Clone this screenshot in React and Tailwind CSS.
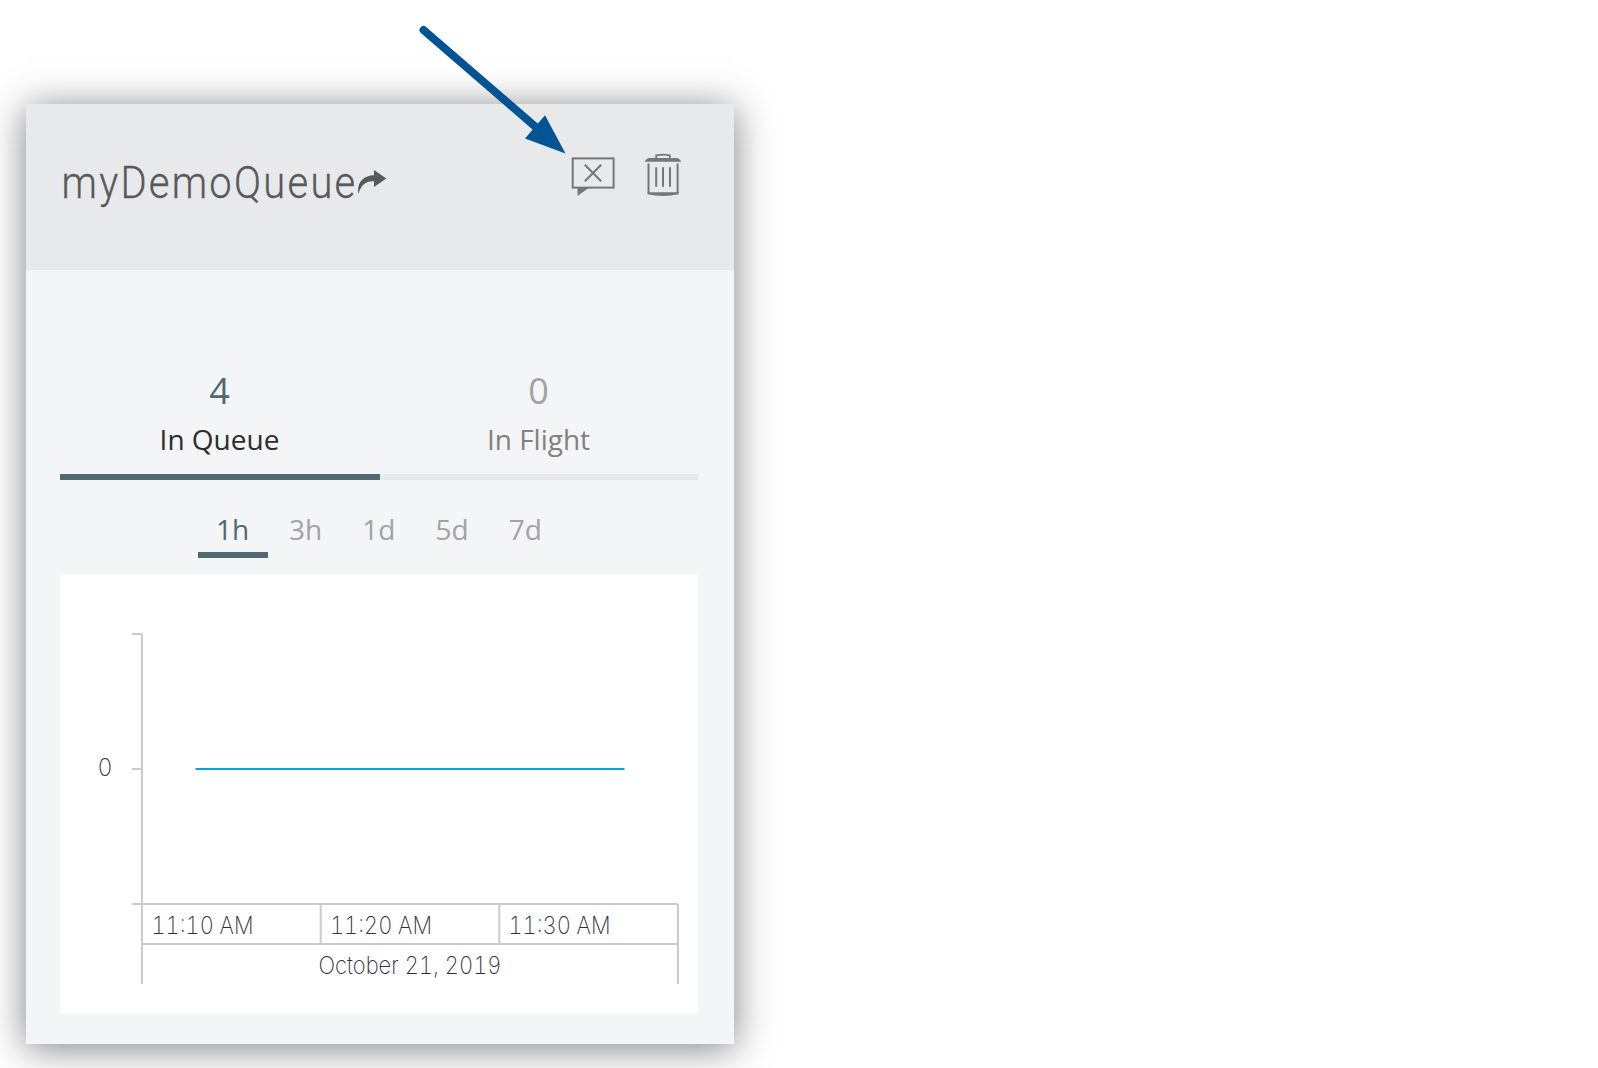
const ranges = ["1h", "3h", "1d", "5d", "7d"];

const times = [
  { label: "11:10 AM", x: 91.5 },
  { label: "11:20 AM", x: 270 },
  { label: "11:30 AM", x: 448.5 },
];

function ShareIcon() {
  return (
    <svg className="h-7 w-[30px]" viewBox="0 0 30 28" fill="#58595b">
      <path d="M17 2 L29.3 10.5 L17 19 V13.4 C8.5 13 4.5 17 1.3 26 C-0.3 14.5 6 7.5 17 7.2 Z" />
    </svg>
  );
}

function PurgeIcon() {
  return (
    <svg className="h-[45px] w-[44px]" viewBox="0 0 44 45" fill="none" stroke="#757678" strokeWidth="2">
      <rect x="1.7" y="6.4" width="40.9" height="29.2" />
      <path d="M13.8 12.8 L30.2 29.2 M30.2 12.8 L13.8 29.2" />
      <path d="M6.5 36 H17.5 L6.5 44 Z" fill="#757678" stroke="none" />
    </svg>
  );
}

function TrashIcon() {
  return (
    <svg className="h-[45px] w-[38px]" viewBox="0 0 38 45" fill="none" stroke="#757678" strokeWidth="2">
      <path d="M12.2 6.5 V3.3 Q19 2 25.8 3.3 V6.5" strokeWidth="1.8" />
      <path d="M0.5 9.8 Q2.5 6 5.5 6 H32.5 Q35.5 6 37.3 9.8 Z" fill="#757678" stroke="none" />
      <path d="M4.5 11.5 V41 M33.6 11.5 V41" />
      <path d="M3.5 40.2 H34.6 V42.3 Q19 45.8 3.5 42.3 Z" fill="#757678" stroke="none" />
      <path d="M12.2 15.3 V34.7 M19 15.3 V34.7 M26 15.3 V34.7" />
    </svg>
  );
}

function Stat({ value, label, active }) {
  return (
    <div
      className={
        active
          ? "flex w-[320px] flex-col items-center border-b-[6px] border-[#4f6872] pr-px text-[#4f6872]"
          : "flex flex-1 flex-col items-center border-b-[6px] border-[#e8e9eb] pr-px text-[#a2a3a3]"
      }
    >
      <span className="text-[36px] leading-[50px]">{value}</span>
      <span
        className={
          active
            ? "mb-[12px] text-[28px] leading-[46px] text-[#2d2d2d]"
            : "mb-[12px] text-[28px] leading-[46px] text-[#808181]"
        }
      >
        {label}
      </span>
    </div>
  );
}

function Chart() {
  return (
    <svg className="block h-[440px] w-[638px] bg-white" viewBox="0 0 638 440">
      <g stroke="#cbcbcb" strokeWidth="2" fill="none">
        <path d="M72 60 H82 M82 60 V410 M72 195 H82 M72 330 H618 M82 370 H618 M618 330 V410" />
        <path d="M260.7 330 V370 M439.3 330 V370" />
      </g>
      <path d="M135.5 195 H564.5" stroke="#05a3df" strokeWidth="2" />
      <g className="tabular-nums" fontFamily="Inter, sans-serif" fontSize="24" fontWeight="200" fill="#2f2d40">
        <text x="37.5" y="202" textLength="15" lengthAdjust="spacingAndGlyphs">0</text>
        {times.map((t) => (
          <text key={t.label} x={t.x} y="360" textLength="102" lengthAdjust="spacingAndGlyphs">
            {t.label}
          </text>
        ))}
        <text x="258.5" y="400" textLength="183" lengthAdjust="spacingAndGlyphs">October 21, 2019</text>
      </g>
    </svg>
  );
}

export default function App() {
  return (
    <div className="relative h-[1068px] w-[1598px] overflow-hidden bg-white pl-[26px] pt-[104px] font-['Open_Sans',sans-serif]">
      <section className="h-[940px] w-[708px] bg-[#f4f5f7] shadow-[0_4px_36px_rgba(0,0,0,0.5)]">
        <header className="flex h-[166px] items-start justify-between bg-[#e8e9eb] pl-[34px] pr-[52px]">
          <div className="flex items-start pt-[50px]">
            <h1 className="w-[297px]">
              <svg className="block h-[64px] w-[297px] overflow-visible" viewBox="0 0 297 64">
                <text x="1.5" y="44.3" fontFamily="Roboto, sans-serif" fontSize="44" fontWeight="300" fill="#58595b" stroke="#58595b" strokeWidth="0.3" letterSpacing="2.5" textLength="296" lengthAdjust="spacingAndGlyphs">myDemoQueue</text>
              </svg>
            </h1>
            <span className="mt-[14px]">
              <ShareIcon />
            </span>
          </div>
          <div className="flex gap-[29px] pt-[48px]">
            <PurgeIcon />
            <TrashIcon />
          </div>
        </header>
        <div className="pl-[34px] pr-[36px] pt-[96px]">
          <div className="flex">
            <Stat value="4" label="In Queue" active />
            <Stat value="0" label="In Flight" />
          </div>
          <nav className="ml-[138px] flex gap-[3.2px] pt-[26px]">
            {ranges.map((r, i) => (
              <span
                key={r}
                className={
                  i === 0
                    ? "h-[52px] w-[70px] border-b-[6px] border-[#4f6872] pr-px text-center text-[28px] leading-[46px] text-[#4f6872]"
                    : "h-[52px] w-[70px] pr-px text-center text-[28px] leading-[46px] text-[#a2a3a3]"
                }
              >
                {r}
              </span>
            ))}
          </nav>
          <div className="mt-4">
            <Chart />
          </div>
        </div>
      </section>
      <svg className="absolute left-[410px] top-[16px] h-[144px] w-[160px]" viewBox="410 16 160 144">
        <path d="M423.5 30 L538 129" stroke="#005494" strokeWidth="8" strokeLinecap="round" />
        <path d="M565.5 153.5 L545 115.3 L525 138.6 Z" fill="#005494" />
      </svg>
    </div>
  );
}
